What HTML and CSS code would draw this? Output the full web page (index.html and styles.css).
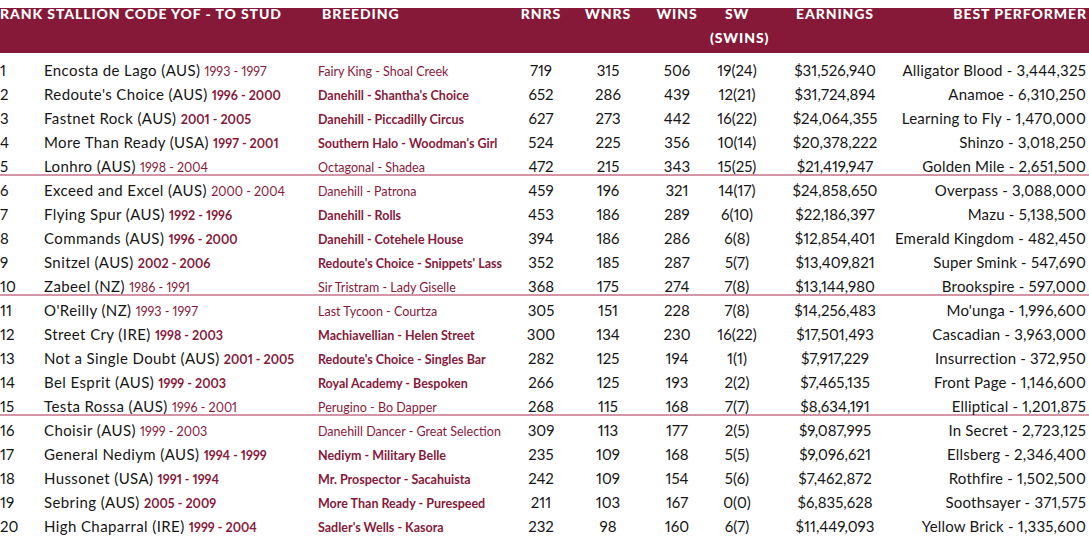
FILE: index.html
```html
<!DOCTYPE html>
<html lang="en">
<head>
<meta charset="utf-8">
<title>Stallions</title>
<link rel="stylesheet" href="styles.css">
</head>
<body>
<div class="table">
  <div class="head">
    <div class="hrow">
      <div class="h-left">RANK STALLION CODE YOF - TO STUD</div>
      <div class="h-breed">BREEDING</div>
      <div class="c-num">RNRS</div>
      <div class="c-num">WNRS</div>
      <div class="c-num">WINS</div>
      <div class="c-num">SW<br>(SWINS)</div>
      <div class="c-num">EARNINGS</div>
      <div class="c-best">BEST PERFORMER</div>
    </div>
  </div>
  <div class="body">
    <div class="row lite"><div>1</div><div class="name">Encosta de Lago (AUS) <span class="yr">1993 - 1997</span></div><div class="breed">Fairy King - Shoal Creek</div><div class="n">719</div><div class="n">315</div><div class="n">506</div><div class="n">19(24)</div><div class="n">$31,526,940</div><div class="best">Alligator Blood - 3,444,325</div></div>
    <div class="row"><div>2</div><div class="name">Redoute's Choice (AUS) <span class="yr">1996 - 2000</span></div><div class="breed">Danehill - Shantha's Choice</div><div class="n">652</div><div class="n">286</div><div class="n">439</div><div class="n">12(21)</div><div class="n">$31,724,894</div><div class="best">Anamoe - 6,310,250</div></div>
    <div class="row"><div>3</div><div class="name">Fastnet Rock (AUS) <span class="yr">2001 - 2005</span></div><div class="breed">Danehill - Piccadilly Circus</div><div class="n">627</div><div class="n">273</div><div class="n">442</div><div class="n">16(22)</div><div class="n">$24,064,355</div><div class="best">Learning to Fly - 1,470,000</div></div>
    <div class="row"><div>4</div><div class="name">More Than Ready (USA) <span class="yr">1997 - 2001</span></div><div class="breed">Southern Halo - Woodman's Girl</div><div class="n">524</div><div class="n">225</div><div class="n">356</div><div class="n">10(14)</div><div class="n">$20,378,222</div><div class="best">Shinzo - 3,018,250</div></div>
    <div class="row lite div"><div>5</div><div class="name">Lonhro (AUS) <span class="yr">1998 - 2004</span></div><div class="breed">Octagonal - Shadea</div><div class="n">472</div><div class="n">215</div><div class="n">343</div><div class="n">15(25)</div><div class="n">$21,419,947</div><div class="best">Golden Mile - 2,651,500</div></div>
    <div class="row lite"><div>6</div><div class="name">Exceed and Excel (AUS) <span class="yr">2000 - 2004</span></div><div class="breed">Danehill - Patrona</div><div class="n">459</div><div class="n">196</div><div class="n">321</div><div class="n">14(17)</div><div class="n">$24,858,650</div><div class="best">Overpass - 3,088,000</div></div>
    <div class="row"><div>7</div><div class="name">Flying Spur (AUS) <span class="yr">1992 - 1996</span></div><div class="breed">Danehill - Rolls</div><div class="n">453</div><div class="n">186</div><div class="n">289</div><div class="n">6(10)</div><div class="n">$22,186,397</div><div class="best">Mazu - 5,138,500</div></div>
    <div class="row"><div>8</div><div class="name">Commands (AUS) <span class="yr">1996 - 2000</span></div><div class="breed">Danehill - Cotehele House</div><div class="n">394</div><div class="n">186</div><div class="n">286</div><div class="n">6(8)</div><div class="n">$12,854,401</div><div class="best">Emerald Kingdom - 482,450</div></div>
    <div class="row"><div>9</div><div class="name">Snitzel (AUS) <span class="yr">2002 - 2006</span></div><div class="breed">Redoute's Choice - Snippets' Lass</div><div class="n">352</div><div class="n">185</div><div class="n">287</div><div class="n">5(7)</div><div class="n">$13,409,821</div><div class="best">Super Smink - 547,690</div></div>
    <div class="row lite div"><div>10</div><div class="name">Zabeel (NZ) <span class="yr">1986 - 1991</span></div><div class="breed">Sir Tristram - Lady Giselle</div><div class="n">368</div><div class="n">175</div><div class="n">274</div><div class="n">7(8)</div><div class="n">$13,144,980</div><div class="best">Brookspire - 597,000</div></div>
    <div class="row lite"><div>11</div><div class="name">O'Reilly (NZ) <span class="yr">1993 - 1997</span></div><div class="breed">Last Tycoon - Courtza</div><div class="n">305</div><div class="n">151</div><div class="n">228</div><div class="n">7(8)</div><div class="n">$14,256,483</div><div class="best">Mo'unga - 1,996,600</div></div>
    <div class="row"><div>12</div><div class="name">Street Cry (IRE) <span class="yr">1998 - 2003</span></div><div class="breed">Machiavellian - Helen Street</div><div class="n">300</div><div class="n">134</div><div class="n">230</div><div class="n">16(22)</div><div class="n">$17,501,493</div><div class="best">Cascadian - 3,963,000</div></div>
    <div class="row"><div>13</div><div class="name">Not a Single Doubt (AUS) <span class="yr">2001 - 2005</span></div><div class="breed">Redoute's Choice - Singles Bar</div><div class="n">282</div><div class="n">125</div><div class="n">194</div><div class="n">1(1)</div><div class="n">$7,917,229</div><div class="best">Insurrection - 372,950</div></div>
    <div class="row"><div>14</div><div class="name">Bel Esprit (AUS) <span class="yr">1999 - 2003</span></div><div class="breed">Royal Academy - Bespoken</div><div class="n">266</div><div class="n">125</div><div class="n">193</div><div class="n">2(2)</div><div class="n">$7,465,135</div><div class="best">Front Page - 1,146,600</div></div>
    <div class="row lite div"><div>15</div><div class="name">Testa Rossa (AUS) <span class="yr">1996 - 2001</span></div><div class="breed">Perugino - Bo Dapper</div><div class="n">268</div><div class="n">115</div><div class="n">168</div><div class="n">7(7)</div><div class="n">$8,634,191</div><div class="best">Elliptical - 1,201,875</div></div>
    <div class="row lite"><div>16</div><div class="name">Choisir (AUS) <span class="yr">1999 - 2003</span></div><div class="breed">Danehill Dancer - Great Selection</div><div class="n">309</div><div class="n">113</div><div class="n">177</div><div class="n">2(5)</div><div class="n">$9,087,995</div><div class="best">In Secret - 2,723,125</div></div>
    <div class="row"><div>17</div><div class="name">General Nediym (AUS) <span class="yr">1994 - 1999</span></div><div class="breed">Nediym - Military Belle</div><div class="n">235</div><div class="n">109</div><div class="n">168</div><div class="n">5(5)</div><div class="n">$9,096,621</div><div class="best">Ellsberg - 2,346,400</div></div>
    <div class="row"><div>18</div><div class="name">Hussonet (USA) <span class="yr">1991 - 1994</span></div><div class="breed">Mr. Prospector - Sacahuista</div><div class="n">242</div><div class="n">109</div><div class="n">154</div><div class="n">5(6)</div><div class="n">$7,462,872</div><div class="best">Rothfire - 1,502,500</div></div>
    <div class="row"><div>19</div><div class="name">Sebring (AUS) <span class="yr">2005 - 2009</span></div><div class="breed">More Than Ready - Purespeed</div><div class="n">211</div><div class="n">103</div><div class="n">167</div><div class="n">0(0)</div><div class="n">$6,835,628</div><div class="best">Soothsayer - 371,575</div></div>
    <div class="row"><div>20</div><div class="name">High Chaparral (IRE) <span class="yr">1999 - 2004</span></div><div class="breed">Sadler's Wells - Kasora</div><div class="n">232</div><div class="n">98</div><div class="n">160</div><div class="n">6(7)</div><div class="n">$11,449,093</div><div class="best">Yellow Brick - 1,335,600</div></div>
  </div>
</div>
</body>
</html>
```
FILE: styles.css
```css
html, body {
  margin: 0;
  padding: 0;
  background: #ffffff;
}
body {
  font-family: Lato, "Open Sans", sans-serif;
  font-variant-numeric: proportional-nums;
  color: #161616;
  width: 1089px;
  overflow: hidden;
}
.head {
  display: flow-root;
  margin-top: 8px;
  height: 45px;
  background: #851937;
}
.hrow {
  margin-top: -6px;
  display: grid;
  grid-template-columns: 318px 192px 62px 72px 66px 54px 142px 180px;
  color: #ffffff;
  font-weight: 900;
  font-size: 14px;
  letter-spacing: 0.9px;
  line-height: 24px;
  text-transform: uppercase;
}
.h-left { white-space: nowrap; }
.h-breed { padding-left: 4px; }
.c-num { text-align: center; }
.c-best { justify-self: end; white-space: nowrap; margin-right: -1px; }
.body {
  margin-top: 5px;
}
.row {
  display: grid;
  grid-template-columns: 44px 274px 192px 62px 72px 66px 54px 142px 180px;
  align-items: baseline;
  height: 24px;
  line-height: 24px;
  font-size: 15px;
  white-space: nowrap;
}
.row.div {
  background: linear-gradient(#d495a6, #d495a6) left 0 bottom 2px / 100% 2px no-repeat;
}
.name {
  letter-spacing: 0.4px;
}
.yr {
  font-size: 12.5px;
  letter-spacing: 0;
  color: #861a3b;
  font-weight: 700;
}
.breed {
  font-size: 12.5px;
  color: #861a3b;
  font-weight: 700;
}
.row.lite .yr,
.row.lite .breed {
  font-weight: 400;
}
.n { text-align: center; }
.best { justify-self: end; letter-spacing: 0.2px; }
```
